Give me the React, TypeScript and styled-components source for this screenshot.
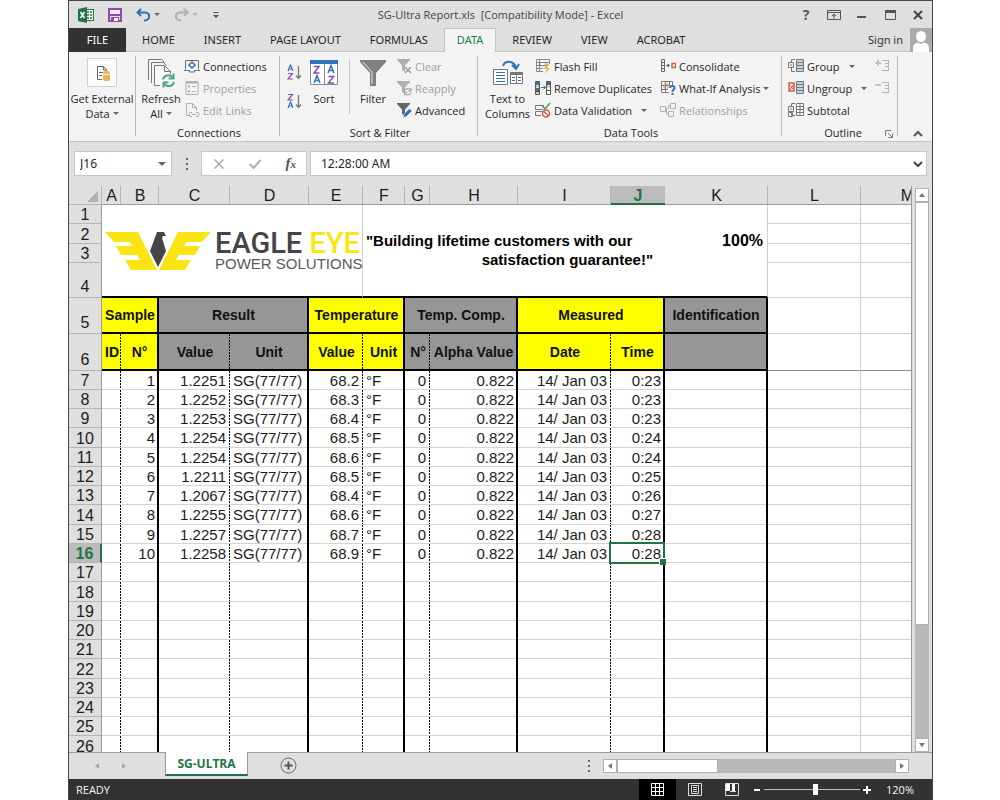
import React from "react";
import styled, { createGlobalStyle, css } from "styled-components";

const ui = `"Open Sans", "Noto Sans", sans-serif`;
const tabs = `"Noto Sans", "Open Sans", sans-serif`;
const sheet = `"Liberation Sans", Arial, sans-serif`;
const green = "#217346";
const purple = "#8b4bb0";
const blue = "#2f72b8";

const Global = createGlobalStyle`
  * { box-sizing: border-box; }
  body { margin: 0; background: #fff; }
  button, input { font: inherit; color: inherit; border: 0; padding: 0; margin: 0; background: none; }
  svg { display: block; flex: none; }
`;

const Page = styled.div`
  padding: 0 67px 0 68px;
`;

const Window = styled.main`
  height: 100vh;
  min-height: 480px;
  display: flex;
  flex-direction: column;
  border: 1px solid #454545;
  border-bottom: 0;
  background: #dfdfdf;
  font-family: ${ui};
  font-size: 11px;
  color: #262626;
  overflow: hidden;
`;

/* ---------- title bar ---------- */

const TitleBar = styled.header`
  display: grid;
  grid-template-columns: 1fr auto 1fr;
  align-items: center;
  height: 27px;
  flex: none;
`;

const QuickAccess = styled.div`
  display: flex;
  align-items: center;
  padding-left: 9px;
`;

const QuickButton = styled.button`
  display: flex;
  align-items: center;
  gap: 3px;
  margin-right: 14px;
`;

const Title = styled.h1`
  margin: 0;
  font-size: 11px;
  font-weight: 400;
  white-space: pre;
  color: #444;
`;

const WindowButtons = styled.div`
  display: flex;
  justify-content: flex-end;
`;

const WindowButton = styled.button`
  width: 28px;
  height: 26px;
  display: flex;
  align-items: center;
  justify-content: center;
  font-size: 14px;
  font-weight: 700;
  color: #555;
`;

/* ---------- ribbon tabs ---------- */

const TabRow = styled.nav`
  display: flex;
  height: 24px;
  flex: none;
  border-bottom: 1px solid #c3c3c3;
  font-family: ${tabs};
`;

const FileTab = styled.button`
  width: 57px;
  height: 24px;
  padding-bottom: 1px;
  background: #323232;
  color: #fff;
  text-align: center;
  margin-right: 3px;
`;

const Tab = styled.button<{ $active?: boolean }>`
  height: 24px;
  padding: 0 12px 2px;
  margin-right: 3px;
  border: 1px solid transparent;
  border-bottom: 0;
  ${(p) =>
    p.$active &&
    css`
      background: #f3f3f3;
      border-color: #c3c3c3;
      color: #19824a;
    `}
`;

const SignIn = styled.a`
  display: flex;
  align-items: center;
  gap: 7px;
  margin-left: auto;
  color: #333;
  text-decoration: none;
`;

/* ---------- ribbon ---------- */

const Ribbon = styled.section`
  display: flex;
  flex: none;
  height: 90px;
  padding-top: 3px;
  background: #f3f3f3;
  border-bottom: 1px solid #c6c6c6;
`;

const GroupBox = styled.div<{ $w: number; $pad: number }>`
  width: ${(p) => p.$w}px;
  flex: none;
  padding-left: ${(p) => p.$pad}px;
  display: flex;
  flex-direction: column;
  background: linear-gradient(#b9b9b9, #b9b9b9) right 1px / 1px 80px no-repeat;
`;

const GroupBody = styled.div`
  display: flex;
  height: 70px;
`;

const GroupLabel = styled.div`
  display: flex;
  justify-content: center;
  align-items: center;
  line-height: 16px;
  position: relative;
`;

const Launcher = styled.button`
  position: absolute;
  right: 5px;
  top: 5px;
`;

const BigButton = styled.button<{ $w: number }>`
  width: ${(p) => p.$w}px;
  flex: none;
  display: flex;
  flex-direction: column;
  align-items: center;
  line-height: 15px;
  white-space: nowrap;
`;

const BigIcon = styled.span`
  height: 36px;
  display: flex;
  align-items: center;
  justify-content: center;
`;

const Line = styled.span`
  display: flex;
  align-items: center;
  gap: 3px;
`;

const SmallColumn = styled.div<{ $w?: number }>`
  display: flex;
  flex-direction: column;
  ${(p) => p.$w && `width: ${p.$w}px;`}
`;

const SmallButton = styled.button<{ $caretGap?: number }>`
  display: flex;
  align-items: center;
  gap: 3px;
  height: 22px;
  white-space: nowrap;
  & > i {
    margin-left: ${(p) => p.$caretGap ?? 0}px;
  }
  &:disabled {
    color: #a0a0a0;
  }
`;

const SortColumn = styled.div`
  width: 24px;
  display: flex;
  flex-direction: column;
  align-items: center;
  gap: 12px;
  padding-top: 9px;
`;

const Divider = styled.div`
  width: 1px;
  height: 54px;
  margin: 5px 0 0 7px;
  background: #c6c6c6;
`;

const Caret = styled.i<{ $light?: boolean; $size?: number }>`
  border: ${(p) => p.$size ?? 3}px solid transparent;
  border-bottom: 0;
  border-top-color: ${(p) => (p.$light ? "#b5b5b5" : "#666")};
`;

const Collapse = styled.button`
  margin: auto 9px 3px auto;
`;

/* ---------- formula bar ---------- */

const FormulaBar = styled.section`
  display: flex;
  flex: none;
  height: 44px;
  padding: 9px 5px 10px;
`;

const Field = styled.div<{ $w?: number }>`
  display: flex;
  align-items: center;
  background: #fff;
  border: 1px solid #c6c6c6;
  padding: 0 5px;
  ${(p) => (p.$w ? `width: ${p.$w}px;` : "flex: 1;")}
  input {
    flex: 1;
    min-width: 0;
    outline: none;
    font-family: ${tabs};
    font-size: 12px;
  }
`;

const Entry = styled(Field)`
  padding: 0 3px 0 10px;
`;

const EntryButtons = styled(Field)`
  justify-content: space-between;
  padding: 0 10px 0 11px;
  margin-right: 3px;
`;

const Grip = styled.span`
  width: 29px;
  display: flex;
  flex-direction: column;
  align-items: center;
  justify-content: center;
  gap: 3px;
  b {
    width: 2px;
    height: 2px;
    background: #666;
  }
`;

/* ---------- worksheet ---------- */

const SheetArea = styled.section`
  display: flex;
  flex: 1;
  min-height: 0;
`;

const Viewport = styled.div`
  flex: 1;
  min-width: 0;
  overflow: hidden;
  border-right: 1px solid #9b9b9b;
`;

const Grid = styled.table`
  table-layout: fixed;
  width: 100%;
  min-width: 885px;
  border-collapse: separate;
  border-spacing: 0;
  font-family: ${sheet};
  font-size: 16px;
  line-height: 16px;
  color: #1c1c1c;
  td, th { padding: 0; }
`;

const ColumnHead = styled.th<{ $on?: boolean }>`
  height: 19px;
  font-weight: 400;
  border-bottom: 1px solid #9b9b9b;
  background: linear-gradient(#b5b5b5, #b5b5b5) right / 1px 100% no-repeat #dfdfdf;
  && { padding-top: 2px; }
  ${(p) =>
    p.$on &&
    css`
      background: #bcbcbc;
      color: ${green};
      font-weight: 700;
      line-height: 15px;
      border-bottom: 2px solid ${green};
    `}
`;

const Corner = styled.td`
  height: 19px;
  border-right: 1px solid #b5b5b5;
  border-bottom: 1px solid #b5b5b5;
  background: #dfdfdf;
  svg { margin: 3px 3px 0 auto; }
`;

const Row = styled.tr<{ $h: number }>`
  height: ${(p) => p.$h}px;
`;

const RowHead = styled.th<{ $on?: boolean; $tall?: boolean }>`
  font-weight: 400;
  vertical-align: bottom;
  background: #dfdfdf;
  border-right: 1px solid #9b9b9b;
  border-bottom: 1px solid #b5b5b5;
  && { padding-bottom: ${(p) => (p.$tall ? 2 : 0)}px; }
  ${(p) =>
    p.$on &&
    css`
      background: #bcbcbc;
      color: ${green};
      font-weight: 700;
      border-right: 2px solid ${green};
    `}
`;

type Edge = "thin" | "dash" | "thick" | "none";

const edgeStyle = (edge: Edge) => {
  if (edge === "thick") return "border-right: 2px solid #000;";
  if (edge === "thin") return "border-right: 1px solid #d0d0d0;";
  if (edge === "dash")
    return `background-image: repeating-linear-gradient(#000 0 2px, transparent 2px 3px);
      background-size: 1px 100%; background-position: right; background-repeat: no-repeat;`;
  return "";
};

const Cell = styled.td<{ $edge: Edge; $align?: string }>`
  position: relative;
  white-space: nowrap;
  font-size: 15px;
  text-align: ${(p) => p.$align ?? "right"};
  box-shadow: inset 0 -1px #d4d4d4;
  ${(p) => edgeStyle(p.$edge)}
  && { padding: 0 ${(p) => (p.$edge === "dash" ? 4 : 2)}px 0 3px; }
`;

const Heading = styled.th<{ $fill: "yellow" | "gray"; $edge: Edge }>`
  font-size: 14px;
  white-space: nowrap;
  color: #111;
  background-color: ${(p) => (p.$fill === "yellow" ? "#ff0" : "#969696")};
  border-bottom: 2px solid #000;
  ${(p) => edgeStyle(p.$edge)}
  && { padding-left: 1px; }
`;

const Merged = styled.td<{ $edge: Edge }>`
  background: #fff;
  vertical-align: top;
  border-bottom: 2px solid #000;
  ${(p) => edgeStyle(p.$edge)}
`;

const Blank = styled.td<{ $frozen?: boolean }>`
  border-right: 1px solid #d0d0d0;
  border-bottom: 1px solid ${(p) => (p.$frozen ? "#8a8a8a" : "#d0d0d0")};
`;

const SheetBody = styled.tbody`
  background: #fff;
`;

const Selection = styled.span`
  position: absolute;
  inset: -2px -2px -1px -2px;
  border: 2px solid ${green};
  z-index: 1;
  &::after {
    content: "";
    position: absolute;
    right: -3px;
    bottom: -3px;
    width: 6px;
    height: 6px;
    background: ${green};
    border: 1px solid #fff;
    border-right: 0;
    border-bottom: 0;
  }
`;

const Logo = styled.div`
  display: flex;
  gap: 4px;
  padding: 27px 0 0 3px;
  white-space: nowrap;
`;

const LogoName = styled.div`
  font-family: Roboto, sans-serif;
  font-size: 29px;
  font-weight: 500;
  line-height: 23px;
  color: #454547;
  span { color: #fbe512; }
`;

const LogoSub = styled.div`
  font-family: ${sheet};
  font-size: 15px;
  line-height: 18px;
  color: #5a5a5c;
`;

const Slogan = styled.div`
  display: flex;
  flex-direction: column;
  padding: 26px 12px 0 3px;
  font-size: 15px;
  font-weight: 700;
  line-height: 19px;
  white-space: nowrap;
  color: #000;
  span:last-child { text-align: right; }
`;

const Percent = styled.div`
  padding: 26px 4px 0 0;
  font-weight: 700;
  line-height: 19px;
  text-align: right;
  color: #000;
`;

const VerticalScroll = styled.div`
  width: 20px;
  display: flex;
  flex-direction: column;
  padding: 2px 3px 0 3px;
`;

const ScrollButton = styled.button`
  width: 14px;
  height: 14px;
  flex: none;
  display: flex;
  align-items: center;
  justify-content: center;
  background: #fff;
  border: 1px solid #b0b0b0;
`;

const Thumb = styled.div<{ $grow: number }>`
  flex: ${(p) => p.$grow} 0 0;
  background: #fff;
  border: 1px solid #b0b0b0;
`;

const Track = styled.div<{ $grow: number }>`
  flex: ${(p) => p.$grow} 0 0;
  background: #b9b9b9;
`;

/* ---------- bottom bars ---------- */

const SheetBar = styled.section`
  display: flex;
  flex: none;
  height: 27px;
  border-top: 1px solid #9b9b9b;
`;

const SheetArrows = styled.div`
  width: 96px;
  display: flex;
  align-items: center;
  gap: 19px;
  padding-left: 24px;
`;

const SheetTab = styled.button`
  width: 83px;
  height: 24px;
  margin-top: -1px;
  background: #fff;
  border: 1px solid #9b9b9b;
  border-top: 0;
  border-bottom: 2px solid ${green};
  color: ${green};
  font-size: 12px;
  font-weight: 700;
`;

const AddSheet = styled.button`
  margin: 0 auto 2px 32px;
`;

const HorizontalScroll = styled.div`
  width: 306px;
  height: 14px;
  display: flex;
  margin: 6px 23px 0 0;
`;

const StatusBar = styled.footer`
  display: flex;
  align-items: center;
  flex: none;
  height: 21px;
  padding: 0 18px 0 7px;
  background: #323232;
  color: #f5f5f5;
`;

const Views = styled.div`
  display: flex;
  margin-left: auto;
`;

const ViewButton = styled.button<{ $on?: boolean }>`
  width: 37px;
  height: 21px;
  display: flex;
  align-items: center;
  justify-content: center;
  background: ${(p) => (p.$on ? "#000" : "none")};
`;

const ZoomButton = styled.button`
  width: 14px;
  height: 21px;
  display: flex;
  align-items: center;
  justify-content: center;
`;

const ZoomSlider = styled.input`
  appearance: none;
  width: 96px;
  height: 12px;
  background: linear-gradient(#c0c0c0, #c0c0c0) center / 100% 1px no-repeat;
  &::-webkit-slider-thumb {
    appearance: none;
    width: 5px;
    height: 11px;
    background: #fff;
  }
`;

const ZoomValue = styled.span`
  width: 40px;
  text-align: right;
`;

/* ---------- icons ---------- */

const Svg = ({ w = 16, h = 16, children }: { w?: number; h?: number; children: React.ReactNode }) => (
  <svg width={w} height={h} viewBox={`0 0 ${w} ${h}`} fill="none" aria-hidden="true">
    {children}
  </svg>
);

const ExcelIcon = () => (
  <Svg>
    <rect x="7.500" y="2.500" width="8" height="11" fill="#fff" stroke={green} />
    <path d="M9 5h2M12 5h2M9 8h2M12 8h2M9 11h2M12 11h2" stroke={green} strokeWidth="1.500" />
    <path d="M0 2l9-2v16l-9-2z" fill={green} />
    <path d="M2.500 5l4 6M6.500 5l-4 6" stroke="#fff" strokeWidth="1.500" />
  </Svg>
);

const SaveIcon = () => (
  <Svg w={14} h={14}>
    <path d="M1 1h12v12H1z" stroke={purple} strokeWidth="2" />
    <path d="M2 7h10" stroke={purple} strokeWidth="2" />
    <path d="M3 9h8v5H3z" fill={purple} />
    <path d="M6 10h4v3H6z" fill="#fff" />
    <path d="M2 2h10v4H2z" fill="#f4eef8" />
  </Svg>
);

const UndoIcon = () => (
  <Svg w={15} h={14}>
    <path d="M5 1L1.500 4.500L5 8M2 4.500H9c6 0 5.500 8-1 8" stroke={blue} strokeWidth="2" />
  </Svg>
);

const RedoIcon = () => (
  <Svg w={15} h={14}>
    <path d="M10 1l3.500 3.500L10 8M13 4.500H6c-6 0-5.500 8 1 8" stroke="#b0b0b0" strokeWidth="2" />
  </Svg>
);

const MoreIcon = () => (
  <Svg w={8} h={8}>
    <path d="M1.500 1.500h5" stroke="#555" />
    <path d="M1 4h6L4 7z" fill="#555" />
  </Svg>
);

const RibbonDisplayIcon = () => (
  <Svg w={14} h={10}>
    <path d="M.5.5h13v9H.5zM.5 2.500h13M7 8.500V4.500M5 6l2-2 2 2" stroke="#555" />
  </Svg>
);

const MinimizeIcon = () => (
  <Svg w={10} h={10}>
    <path d="M0 7h9" stroke="#555" strokeWidth="2" />
  </Svg>
);

const RestoreIcon = () => (
  <Svg w={11} h={10}>
    <path d="M.5.5h10v9H.5z" stroke="#555" />
    <path d="M0 1.500h11" stroke="#555" strokeWidth="3" />
  </Svg>
);

const CloseIcon = () => (
  <Svg w={10} h={10}>
    <path d="M1 1l8 8M9 1L1 9" stroke="#444" strokeWidth="2" />
  </Svg>
);

const Avatar = () => (
  <Svg w={22} h={24}>
    <path d="M0 0h22v24H0z" fill="#ababab" />
    <ellipse cx="11" cy="8.500" rx="5" ry="5.500" fill="#fff" />
    <path d="M3 24v-4c0-3 2-5 5-5.500l3 1.500 3-1.500c3 .5 5 2.500 5 5.500v4z" fill="#fff" />
  </Svg>
);

const ExternalIcon = () => (
  <Svg w={30} h={30}>
    <path d="M.5.5h29v28H.5z" fill="#fcfcfc" stroke="#d0d0d0" />
    <path d="M10.500 21.500v-13h6l3 3V13M16.500 8.500v3.500h3M10.500 21.500H15M12 14.500h4M12 17.500h3" stroke="#666" />
    <path d="M16 14.500c0-2 7-2 7 0v7c0 2-7 2-7 0z" fill="#eeb15e" />
    <path d="M16 15.500c1 1.500 6 1.500 7 0" stroke="#fff" />
  </Svg>
);

const RefreshIcon = () => (
  <Svg w={30} h={30}>
    <path d="M2.500 22V1.500h13l3 3M5.500 25V4.500h12l3 3" stroke="#777" />
    <path d="M14 27.500H8.500v-20h10l6 6v3M18.500 7.500v6h6" stroke="#777" fill="#fafafa" />
    <path d="M17 21.500c1-4.500 7-5.500 9.500-2M27.500 15.500v5h-5M28 24c-1 4.500-7 5.500-9.500 2M17.500 29.500v-5h5" stroke="#55a183" strokeWidth="2" />
  </Svg>
);

const ConnectionsIcon = () => (
  <Svg>
    <path d="M1.500 11.500v-9h13v9M0 12.500h5.500v1.500h5v-1.500H16" stroke="#6c6c6c" />
    <path d="M8 4l3 3-3 3-3-3z" stroke={blue} strokeWidth="1.500" fill="#fff" />
  </Svg>
);

const PropertiesIcon = () => (
  <Svg>
    <path d="M2 1.500h12v13H2z" stroke="#b0b0b0" />
    <path d="M2 2.500h12" stroke="#b0b0b0" strokeWidth="2" />
    <path d="M4 6.500h2M4 11.500h2" stroke="#c99" strokeWidth="2" />
    <path d="M8 6.500h4M8 11.500h4" stroke="#b0b0b0" />
  </Svg>
);

const EditLinksIcon = () => (
  <Svg>
    <path d="M5 13.500H2.500v-12h6l4 4V9M8.500 1.500v4h4" stroke="#b0b0b0" />
    <path d="M8 10.500H7a2 2 0 000 4h1M12 10.500h1a2 2 0 010 4h-1M8 12.500h4" stroke="#a8a8a8" />
  </Svg>
);

const A = ({ x, y }: { x: number; y: number }) => (
  <path d={`M${x} ${y + 6}l2.500-6 2.500 6M${x + 1} ${y + 4}h3`} stroke={blue} strokeWidth="1.200" />
);
const Z = ({ x, y }: { x: number; y: number }) => (
  <path d={`M${x} ${y + 0.5}h4.500l-4.500 5.500h5`} stroke={purple} strokeWidth="1.200" />
);

const SortIcon = ({ down }: { down?: boolean }) => (
  <Svg w={15} h={17}>
    {down ? <Z x={1} y={1} /> : <A x={1} y={1} />}
    {down ? <A x={1} y={9} /> : <Z x={1} y={9} />}
    <path d="M11.500 2v12M9 11.500l2.500 3 2.500-3" stroke="#777" strokeWidth="1.300" />
  </Svg>
);

const SortBigIcon = () => (
  <Svg w={28} h={26}>
    <path d="M.5.5h27v24H.5zM14.500 3v21" stroke="#888" fill="#fff" />
    <path d="M0 2h28" stroke={blue} strokeWidth="4" />
    <path d="M4 6.500h5L4 13h5.500M18.500 16.500h5l-5 6.500H24" stroke={purple} strokeWidth="1.500" />
    <path d="M4 23l3-7.500L10 23M5 20.500h4M18 13l3-7.500L24 13M19 10.500h4" stroke={blue} strokeWidth="1.500" />
  </Svg>
);

const FilterBigIcon = () => (
  <Svg w={28} h={28}>
    <path d="M1 1h26v2L17 14v13h-6V14L1 3z" fill="#808080" />
    <path d="M4 3l9 10v12" stroke="#e8e8e8" />
  </Svg>
);

const FilterSmall = ({ kind }: { kind: "clear" | "reapply" | "advanced" }) => {
  const c = kind === "advanced" ? "#666" : "#b0b0b0";
  return (
    <Svg>
      <path d="M1 1h13v1L9 7.500V14l-3-2V7.500L1 2z" fill={c} />
      {kind === "clear" && <path d="M9 9l6 6M15 9l-6 6" stroke="#999" strokeWidth="1.500" />}
      {kind === "reapply" && (
        <path d="M8.500 11c1-3 5-3 6-1M15 8v3h-3M15 12.500c-1 3-5 3-6 1M8.500 15.500v-3h3" stroke="#aaa" strokeWidth="1.200" />
      )}
      {kind === "advanced" && (
        <path d="M7 15.500l1-3.500 5.500-5.500 2.500 2.500-5.500 5.500z" fill={blue} stroke="#f3f3f3" strokeWidth=".5" />
      )}
    </Svg>
  );
};

const TextColumnsIcon = () => (
  <Svg w={30} h={28}>
    <path d="M.5 10.500h14v15H.5z" fill="#fff" stroke="#777" />
    <path d="M3 13.500h9M3 16.500h9M3 19.500h9M3 22.500h9" stroke={blue} />
    <path d="M17.500 13.500h12v11h-12zM23.500 14v11" fill="#fff" stroke="#777" />
    <path d="M17 14.500h13" stroke="#777" strokeWidth="3" />
    <path d="M19 18.500h3M25 18.500h3M19 21.500h3M25 21.500h3" stroke={blue} />
    <path d="M10 7c2-6 11-6 13 2M19 6l4 4 3-5" stroke={blue} strokeWidth="2" />
  </Svg>
);

const FlashFillIcon = () => (
  <Svg>
    <path d="M8 13.500H1.500v-12h13V6M1 4.500h13M1 7.500h8M1 10.500h7M4.500 2v12" stroke="#888" />
    <path d="M5 4.500h6v3H5z" stroke="#4e9a78" fill="#fff" />
    <path d="M12 6l-3 5h3l-2 5 5-6h-3l2-4z" fill="#efb04a" />
  </Svg>
);

const DuplicatesIcon = () => (
  <Svg>
    <path d="M.5 1.500h4v13h-4zM11.500 1.500h4v13h-4z" stroke="#555" fill="#fff" />
    <path d="M1 3.500h3M12 3.500h3M1 9.500h3" stroke={blue} strokeWidth="3" />
    <path d="M1 6.500h3M1 12.500h3M12 6.500h3" stroke="#e8b255" strokeWidth="2" />
    <path d="M12 10.500h3M1 11.500h3" stroke="#555" />
    <path d="M6 7.500h4M8.500 5.500l2 2-2 2" stroke={blue} />
  </Svg>
);

const ValidationIcon = () => (
  <Svg>
    <path d="M9 3.500H.5v4H8M7 9.500H.5v4H6" stroke="#777" />
    <path d="M7.500 4l2.500 3 5-6" stroke="#4e9a78" strokeWidth="1.500" />
    <circle cx="11" cy="11.500" r="3.500" stroke="#dd5a3c" strokeWidth="1.500" fill="#fff" />
    <path d="M8.500 9l5 5" stroke="#dd5a3c" strokeWidth="1.500" />
  </Svg>
);

const ConsolidateIcon = () => (
  <Svg>
    <path d="M1.500 1.500h3v12h-3zM1.500 4.500h3M1.500 7.500h3M1.500 10.500h3" stroke="#666" />
    <path d="M6 7.500h3M8 6l1.500 1.500L8 9z" stroke={blue} fill={blue} />
    <path d="M12 5.500h3.500v4H12z" stroke="#dd5a3c" strokeWidth="1.500" fill="#fff" />
  </Svg>
);

const WhatIfIcon = () => (
  <Svg>
    <path d="M9 12.500H1.500v-11h11V5M1.500 5.500H9M1.500 9.500H8M5.500 1.500v11M9.500 1.500V6" stroke="#777" fill="#fff" />
    <path d="M4 4h4v4H4z" stroke="#e9955c" />
    <path d="M10 8c0-3 5-2.500 4.500 0-.3 1.500-2 1.500-2 4M12.500 13v2" stroke={blue} strokeWidth="2" />
  </Svg>
);

const RelationsIcon = () => (
  <Svg>
    <path d="M.5 4.500h5v5h-5zM10.500 1.500h5v5h-5zM8.500 9.500h5v5h-5zM5.500 6.500h3v-3h2M6.500 7v5h2" stroke="#b0b0b0" />
  </Svg>
);

const OutlineIcon = ({ kind }: { kind: "group" | "ungroup" | "subtotal" }) => (
  <Svg>
    {kind === "ungroup" ? (
      <>
        <path d="M1 3h5v8H1z" stroke="#dd5a3c" strokeWidth="1.500" />
        <path d="M1 11l5-7M2 5l3 4" stroke="#dd5a3c" />
      </>
    ) : (
      <path d="M7 1.500H3.500V4M3.500 10v3.500H7M.5 4.500h5v5h-5zM2 7h2" stroke="#777" />
    )}
    {kind === "subtotal" && <path d="M.5 10.500h4v4h-4z" stroke="#777" />}
    <path
      d="M8.500 1.500h7v12h-7zM8.500 4.500h7M8.500 7.500h7M8.500 10.500h7"
      stroke="#777"
      fill={kind === "subtotal" ? "#fff" : "#b9d4ee"}
    />
    {kind === "subtotal" && <path d="M12 2v12" stroke="#777" />}
  </Svg>
);

const DetailIcon = ({ plus }: { plus?: boolean }) => (
  <Svg>
    <path d={`M0 5h6${plus ? "M3 2v6" : ""}`} stroke="#b5b5b5" strokeWidth="1.500" />
    <path d="M7 2.500h7M10 5.500h4M10 8.500h4M7 12.500h7M13.500 2v11" stroke="#b5b5b5" />
  </Svg>
);

const LauncherIcon = () => (
  <Svg w={8} h={8}>
    <path d="M.5 6V.5H6M3 3l4 4M7.500 3.500v4h-4" stroke="#777" />
  </Svg>
);

const ChevronUp = () => (
  <Svg w={10} h={8}>
    <path d="M1 6l4-4 4 4" stroke="#555" strokeWidth="2" />
  </Svg>
);

const ChevronDown = () => (
  <Svg w={10} h={8}>
    <path d="M1 2l4 4 4-4" stroke="#444" strokeWidth="2" />
  </Svg>
);

const CancelIcon = () => (
  <Svg w={12} h={12}>
    <path d="M1.500 1.500l9 9M10.500 1.500l-9 9" stroke="#aaa" strokeWidth="1.500" />
  </Svg>
);

const CheckIcon = () => (
  <Svg w={14} h={12}>
    <path d="M1.500 6l4 4 7-8" stroke="#b0b0b0" strokeWidth="2" />
  </Svg>
);

const FxLabel = styled.span`
  font-family: "Liberation Serif", serif;
  font-style: italic;
  font-weight: 700;
  font-size: 15px;
  color: #555;
  small { font-size: 11px; }
`;

const Triangle = ({ dir, color = "#777" }: { dir: "up" | "down" | "left" | "right"; color?: string }) => {
  const d = {
    up: "M1 6h6L4 2z",
    down: "M1 2h6L4 6z",
    left: "M6 1v6L2 4z",
    right: "M2 1v6l4-3z",
  }[dir];
  return (
    <Svg w={8} h={8}>
      <path d={d} fill={color} />
    </Svg>
  );
};

const EagleIcon = () => (
  <Svg w={106} h={39}>
    <path d="M0 0h33l19 38H26l-6-10h15l-3-5H16l-5-9h16l-2-4H9z" fill="#fae414" />
    <path d="M106 0H73L54 38h26l6-10H71l3-5h16l5-9H79l2-4h16z" fill="#fae414" />
    <path d="M52 0h7l2 4h-3l-1 2 4 13-8 16-8-16z" fill="#454547" />
  </Svg>
);

const AddIcon = () => (
  <Svg w={17} h={17}>
    <circle cx="8.500" cy="8.500" r="7.500" stroke="#666" />
    <path d="M4.500 8.500h8M8.500 4.500v8" stroke="#555" strokeWidth="2" />
  </Svg>
);

const NormalViewIcon = () => (
  <Svg w={13} h={13}>
    <path d="M.5.5h12v12H.5zM.5 4.500h12M.5 8.500h12M4.500.5v12M8.500.5v12" stroke="#fff" />
  </Svg>
);

const LayoutViewIcon = () => (
  <Svg w={14} h={13}>
    <path d="M.5.5h13v12H.5zM3.500 2.500h7v8h-7zM5 4.500h4M5 6.500h4M5 8.500h4" stroke="#ddd" />
  </Svg>
);

const BreakViewIcon = () => (
  <Svg w={14} h={13}>
    <path d="M.5.5h13v12H.5z" stroke="#ddd" />
    <path d="M1 1h4v7H1zM7 1h3v7H7z" fill="#fff" />
    <path d="M5 8.500h6" stroke="#ddd" />
  </Svg>
);

/* ---------- data ---------- */

const columns: { name: string; width?: number; edge: Edge }[] = [
  { name: "A", width: 19, edge: "dash" },
  { name: "B", width: 38, edge: "thick" },
  { name: "C", width: 71, edge: "dash" },
  { name: "D", width: 79, edge: "thick" },
  { name: "E", width: 54, edge: "dash" },
  { name: "F", width: 42, edge: "thick" },
  { name: "G", width: 25, edge: "dash" },
  { name: "H", width: 88, edge: "thick" },
  { name: "I", width: 93, edge: "dash" },
  { name: "J", width: 54, edge: "thick" },
  { name: "K", width: 103, edge: "thick" },
  { name: "L", width: 93, edge: "thin" },
  { name: "M", edge: "thin" },
];

const readings = [
  ["1.2251", "68.2", "0:23"],
  ["1.2252", "68.3", "0:23"],
  ["1.2253", "68.4", "0:23"],
  ["1.2254", "68.5", "0:24"],
  ["1.2254", "68.6", "0:24"],
  ["1.2211", "68.5", "0:25"],
  ["1.2067", "68.4", "0:26"],
  ["1.2255", "68.6", "0:27"],
  ["1.2257", "68.7", "0:28"],
  ["1.2258", "68.9", "0:28"],
];

const cellsFor = (row: number): string[] => {
  const r = readings[row - 7];
  if (!r) return Array(11).fill("");
  return ["", String(row - 6), r[0], "SG(77/77)", r[1], "°F", "0", "0.822", "14/ Jan 03", r[2], ""];
};

const groups: { text: string; fill: "yellow" | "gray"; subs: string[] }[] = [
  { text: "Sample", fill: "yellow", subs: ["ID", "N°"] },
  { text: "Result", fill: "gray", subs: ["Value", "Unit"] },
  { text: "Temperature", fill: "yellow", subs: ["Value", "Unit"] },
  { text: "Temp. Comp.", fill: "gray", subs: ["N°", "Alpha Value"] },
  { text: "Measured", fill: "yellow", subs: ["Date", "Time"] },
  { text: "Identification", fill: "gray", subs: [""] },
];

const dataRows = Array.from({ length: 20 }, (_, i) => i + 7);

/* ---------- sections ---------- */

const Group = ({
  label,
  w,
  pad = 2,
  launcher,
  children,
}: {
  label?: string;
  w: number;
  pad?: number;
  launcher?: boolean;
  children: React.ReactNode;
}) => (
  <GroupBox $w={w} $pad={pad}>
    <GroupBody>{children}</GroupBody>
    {label && (
      <GroupLabel>
        {label}
        {launcher && (
          <Launcher aria-label="Outline settings">
            <LauncherIcon />
          </Launcher>
        )}
      </GroupLabel>
    )}
  </GroupBox>
);

const RibbonPanel = () => (
  <Ribbon>
    <Group w={67} pad={0}>
      <BigButton $w={66}>
        <BigIcon>
          <ExternalIcon />
        </BigIcon>
        <Line>Get External</Line>
        <Line>
          Data <Caret />
        </Line>
      </BigButton>
    </Group>
    <Group label="Connections" w={144}>
      <BigButton $w={46}>
        <BigIcon>
          <RefreshIcon />
        </BigIcon>
        <Line>Refresh</Line>
        <Line>
          All <Caret />
        </Line>
      </BigButton>
      <SmallColumn>
        <SmallButton><ConnectionsIcon />Connections</SmallButton>
        <SmallButton disabled><PropertiesIcon />Properties</SmallButton>
        <SmallButton disabled><EditLinksIcon />Edit Links</SmallButton>
      </SmallColumn>
    </Group>
    <Group label="Sort &amp; Filter" w={198}>
      <SortColumn>
        <button aria-label="Sort A to Z"><SortIcon /></button>
        <button aria-label="Sort Z to A"><SortIcon down /></button>
      </SortColumn>
      <BigButton $w={36}>
        <BigIcon>
          <SortBigIcon />
        </BigIcon>
        <Line>Sort</Line>
      </BigButton>
      <Divider />
      <BigButton $w={46}>
        <BigIcon>
          <FilterBigIcon />
        </BigIcon>
        <Line>Filter</Line>
      </BigButton>
      <SmallColumn>
        <SmallButton disabled><FilterSmall kind="clear" />Clear</SmallButton>
        <SmallButton disabled><FilterSmall kind="reapply" />Reapply</SmallButton>
        <SmallButton><FilterSmall kind="advanced" />Advanced</SmallButton>
      </SmallColumn>
    </Group>
    <Group label="Data Tools" w={304}>
      <BigButton $w={55}>
        <BigIcon>
          <TextColumnsIcon />
        </BigIcon>
        <Line>Text to</Line>
        <Line>Columns</Line>
      </BigButton>
      <SmallColumn $w={125}>
        <SmallButton><FlashFillIcon />Flash Fill</SmallButton>
        <SmallButton><DuplicatesIcon />Remove Duplicates</SmallButton>
        <SmallButton $caretGap={6}><ValidationIcon />Data Validation<Caret /></SmallButton>
      </SmallColumn>
      <SmallColumn>
        <SmallButton><ConsolidateIcon />Consolidate</SmallButton>
        <SmallButton><WhatIfIcon />What-If Analysis<Caret /></SmallButton>
        <SmallButton disabled><RelationsIcon />Relationships</SmallButton>
      </SmallColumn>
    </Group>
    <Group label="Outline" w={116} pad={6} launcher>
      <SmallColumn $w={87}>
        <SmallButton $caretGap={6}><OutlineIcon kind="group" />Group<Caret /></SmallButton>
        <SmallButton $caretGap={6}><OutlineIcon kind="ungroup" />Ungroup<Caret /></SmallButton>
        <SmallButton><OutlineIcon kind="subtotal" />Subtotal</SmallButton>
      </SmallColumn>
      <SmallColumn>
        <SmallButton disabled aria-label="Show detail"><DetailIcon plus /></SmallButton>
        <SmallButton disabled aria-label="Hide detail"><DetailIcon /></SmallButton>
      </SmallColumn>
    </Group>
    <Collapse aria-label="Collapse the ribbon"><ChevronUp /></Collapse>
  </Ribbon>
);

const Worksheet = () => (
  <Grid>
    <colgroup>
      <col width={33} />
      {columns.map((c) => (
        <col key={c.name} width={c.width} />
      ))}
    </colgroup>
    <thead>
      <tr>
        <Corner>
          <Svg w={11} h={11}>
            <path d="M11 0v11H0z" fill="#b0b0b0" />
          </Svg>
        </Corner>
        {columns.map((c) => (
          <ColumnHead key={c.name} scope="col" $on={c.name === "J"}>{c.name}</ColumnHead>
        ))}
      </tr>
    </thead>
    <SheetBody>
      <Row $h={19}>
        <RowHead scope="row">1</RowHead>
        <Merged colSpan={5} rowSpan={4} $edge="thin">
          <Logo>
            <EagleIcon />
            <div>
              <LogoName>EAGLE <span>EYE</span></LogoName>
              <LogoSub>POWER SOLUTIONS</LogoSub>
            </div>
          </Logo>
        </Merged>
        <Merged colSpan={5} rowSpan={4} $edge="none">
          <Slogan>
            <span>"Building lifetime customers with our</span>
            <span>satisfaction guarantee!"</span>
          </Slogan>
        </Merged>
        <Merged rowSpan={4} $edge="thin">
          <Percent>100%</Percent>
        </Merged>
        <Blank />
        <Blank />
      </Row>
      {[20, 19, 35].map((h, i) => (
        <Row key={i} $h={h}>
          <RowHead scope="row" $tall={h > 20}>{i + 2}</RowHead>
          <Blank />
          <Blank />
        </Row>
      ))}
      <Row $h={36}>
        <RowHead scope="row" $tall>5</RowHead>
        {groups.map((g) => (
          <Heading key={g.text} colSpan={g.subs.length} $fill={g.fill} $edge="thick">{g.text}</Heading>
        ))}
        <Blank />
        <Blank />
      </Row>
      <Row $h={37}>
        <RowHead scope="row" $tall>6</RowHead>
        {groups.flatMap((g) =>
          g.subs.map((s, i) => (
            <Heading key={g.text + i} $fill={g.fill} $edge={i === g.subs.length - 1 ? "thick" : "dash"}>{s}</Heading>
          ))
        )}
        <Blank $frozen />
        <Blank $frozen />
      </Row>
      {dataRows.map((row) => (
        <Row key={row} $h={row % 4 === 2 ? 20 : 19}>
          <RowHead scope="row" $on={row === 16}>{row}</RowHead>
          {cellsFor(row).map((text, i) => (
            <Cell key={i} $edge={columns[i].edge} $align={i === 3 || i === 5 ? "left" : "right"}>
              {text}
              {row === 16 && i === 9 && <Selection />}
            </Cell>
          ))}
          <Blank />
          <Blank />
        </Row>
      ))}
    </SheetBody>
  </Grid>
);

const ribbonTabs = ["HOME", "INSERT", "PAGE LAYOUT", "FORMULAS", "DATA", "REVIEW", "VIEW", "ACROBAT"];

export default function App() {
  return (
    <Page>
      <Global />
      <Window>
        <TitleBar>
          <QuickAccess>
            <QuickButton aria-label="Excel"><ExcelIcon /></QuickButton>
            <QuickButton aria-label="Save"><SaveIcon /></QuickButton>
            <QuickButton aria-label="Undo"><UndoIcon /><Caret /></QuickButton>
            <QuickButton aria-label="Redo"><RedoIcon /><Caret $light /></QuickButton>
            <QuickButton aria-label="Customize toolbar"><MoreIcon /></QuickButton>
          </QuickAccess>
          <Title>{"SG-Ultra Report.xls  [Compatibility Mode] - Excel"}</Title>
          <WindowButtons>
            <WindowButton aria-label="Help">?</WindowButton>
            <WindowButton aria-label="Ribbon display options"><RibbonDisplayIcon /></WindowButton>
            <WindowButton aria-label="Minimize"><MinimizeIcon /></WindowButton>
            <WindowButton aria-label="Restore"><RestoreIcon /></WindowButton>
            <WindowButton aria-label="Close"><CloseIcon /></WindowButton>
          </WindowButtons>
        </TitleBar>
        <TabRow>
          <FileTab>FILE</FileTab>
          {ribbonTabs.map((t) => (
            <Tab key={t} $active={t === "DATA"}>{t}</Tab>
          ))}
          <SignIn href="#">Sign in<Avatar /></SignIn>
        </TabRow>
        <RibbonPanel />
        <FormulaBar>
          <Field $w={98}>
            <input aria-label="Name box" defaultValue="J16" />
            <Caret $size={4} />
          </Field>
          <Grip><b /><b /><b /></Grip>
          <EntryButtons $w={106}>
            <button aria-label="Cancel"><CancelIcon /></button>
            <button aria-label="Enter"><CheckIcon /></button>
            <button aria-label="Insert function"><FxLabel>f<small>x</small></FxLabel></button>
          </EntryButtons>
          <Entry>
            <input aria-label="Formula" defaultValue="12:28:00 AM" />
            <ChevronDown />
          </Entry>
        </FormulaBar>
        <SheetArea>
          <Viewport>
            <Worksheet />
          </Viewport>
          <VerticalScroll>
            <ScrollButton aria-label="Scroll up"><Triangle dir="up" /></ScrollButton>
            <Thumb $grow={422} />
            <Track $grow={113} />
            <ScrollButton aria-label="Scroll down"><Triangle dir="down" /></ScrollButton>
          </VerticalScroll>
        </SheetArea>
        <SheetBar>
          <SheetArrows>
            <button aria-label="Previous sheet"><Triangle dir="left" color="#a5a5a5" /></button>
            <button aria-label="Next sheet"><Triangle dir="right" color="#a5a5a5" /></button>
          </SheetArrows>
          <SheetTab>SG-ULTRA</SheetTab>
          <AddSheet aria-label="New sheet"><AddIcon /></AddSheet>
          <Grip><b /><b /><b /></Grip>
          <HorizontalScroll>
            <ScrollButton aria-label="Scroll left"><Triangle dir="left" /></ScrollButton>
            <Thumb $grow={100} />
            <Track $grow={178} />
            <ScrollButton aria-label="Scroll right"><Triangle dir="right" /></ScrollButton>
          </HorizontalScroll>
        </SheetBar>
        <StatusBar>
          READY
          <Views>
            <ViewButton $on aria-label="Normal view"><NormalViewIcon /></ViewButton>
            <ViewButton aria-label="Page layout view"><LayoutViewIcon /></ViewButton>
            <ViewButton aria-label="Page break view"><BreakViewIcon /></ViewButton>
          </Views>
          <ZoomButton aria-label="Zoom out">
            <Svg w={8} h={8}><path d="M1 4h6" stroke="#fff" strokeWidth="2" /></Svg>
          </ZoomButton>
          <ZoomSlider type="range" aria-label="Zoom" min={0} max={100} defaultValue={54} />
          <ZoomButton aria-label="Zoom in">
            <Svg w={8} h={8}><path d="M0 4h8M4 0v8" stroke="#fff" strokeWidth="2" /></Svg>
          </ZoomButton>
          <ZoomValue>120%</ZoomValue>
        </StatusBar>
      </Window>
    </Page>
  );
}
